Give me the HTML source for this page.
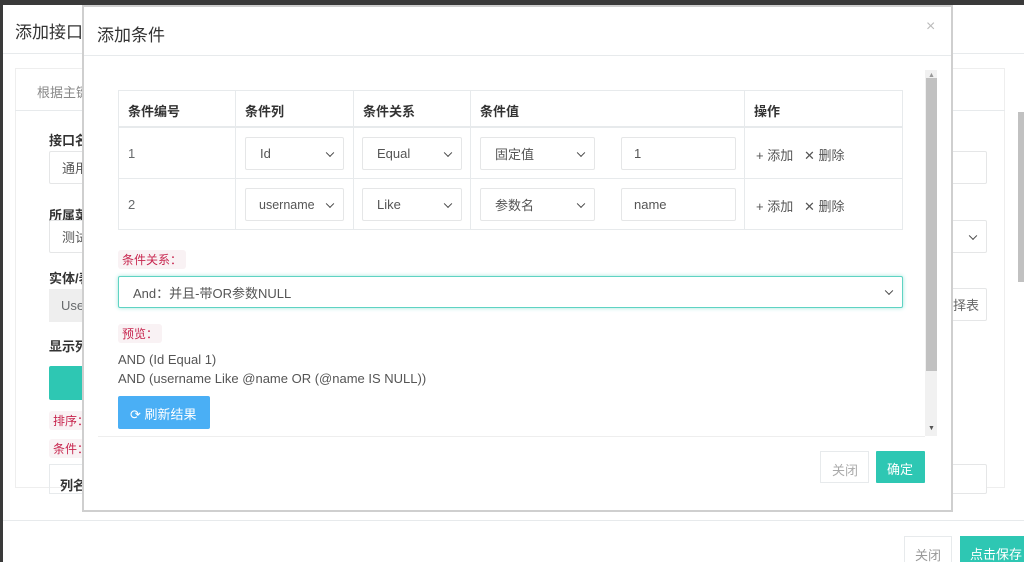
<!DOCTYPE html>
<html><head><meta charset="utf-8"><style>
*{box-sizing:border-box;margin:0;padding:0;white-space:nowrap}
html,body{width:1024px;height:562px;overflow:hidden}
body{background:#3a3a3a;font-family:"Liberation Sans","Noto Sans CJK SC",sans-serif;color:#676a6c;font-size:13px;position:relative}
.a{position:absolute}
.sel{position:absolute;border:1px solid #e5e6e7;border-radius:2px;background:#fff;font-size:13px;color:#555;padding-left:14px;display:flex;align-items:center}
.sel:after{content:"";position:absolute;right:10px;top:50%;width:5px;height:5px;border-right:1.5px solid #444;border-bottom:1.5px solid #444;transform:translateY(-70%) rotate(45deg)}
.inp{position:absolute;border:1px solid #e5e6e7;border-radius:2px;background:#fff;font-size:13px;color:#555;padding-left:12px;display:flex;align-items:center}
.tag{position:absolute;background:#f9f2f4;color:#c7254e;font-size:12px;padding:1px 4px;border-radius:3px}
.vl{position:absolute;width:1px;background:#e7eaec}
.hl{position:absolute;height:1px;background:#e7eaec}
b{font-weight:bold;color:#333}
</style></head><body>
<div class="a" style="left:3px;top:5px;width:1021px;height:557px;background:#fff"></div>
<div class="a" style="left:15px;top:18px;font-size:17px;color:#333">添加接口</div>
<div class="hl" style="left:3px;top:53px;width:1021px"></div>
<div class="a" style="left:15px;top:68px;width:990px;height:420px;border:1px solid #eee"></div>
<div class="a" style="left:37px;top:82px;color:#888">根据主键</div>
<div class="hl" style="left:15px;top:110px;width:990px"></div>
<div class="a" style="left:49px;top:130px"><b>接口名</b></div>
<div class="inp" style="left:49px;top:151px;width:60px;height:33px">通用</div>
<div class="a" style="left:49px;top:205px"><b>所属菜</b></div>
<div class="inp" style="left:49px;top:220px;width:60px;height:33px">测试</div>
<div class="a" style="left:49px;top:268px"><b>实体/表</b></div>
<div class="a" style="left:49px;top:289px;width:60px;height:33px;background:#eee;padding:9px 12px">Use</div>
<div class="a" style="left:49px;top:336px"><b>显示列</b></div>
<div class="a" style="left:49px;top:366px;width:50px;height:34px;background:#2ec7b3;border-radius:2px"></div>
<div class="tag" style="left:49px;top:411px">排序：</div>
<div class="tag" style="left:49px;top:439px">条件：</div>
<div class="a" style="left:49px;top:464px;width:60px;height:30px;border:1px solid #e7eaec;padding:10px"><b>列名</b></div>
<div class="inp" style="left:940px;top:151px;width:47px;height:33px"></div>
<div class="sel" style="left:940px;top:220px;width:47px;height:33px"></div>
<div class="inp" style="left:940px;top:288px;width:47px;height:33px;color:#666">择表</div>
<div class="inp" style="left:940px;top:464px;width:47px;height:30px"></div>
<div class="a" style="left:1018px;top:112px;width:6px;height:170px;background:#c1c1c1"></div>
<div class="hl" style="left:3px;top:520px;width:1021px"></div>
<div class="a" style="left:904px;top:536px;width:48px;height:30px;border:1px solid #e7eaec;color:#999;padding:8px 10px">关闭</div>
<div class="a" style="left:960px;top:536px;width:70px;height:30px;background:#2ec7b3;color:#fff;padding:8px 10px">点击保存</div>
<div class="a" style="left:82px;top:5px;width:871px;height:507px;background:#fff;border:2px solid #cfcfcf"></div>
<div class="a" style="left:97px;top:21px;font-size:17px;color:#333">添加条件</div>
<div class="a" style="left:926px;top:18px;font-size:16px;color:#bbb">×</div>
<div class="hl" style="left:84px;top:55px;width:867px"></div>
<div class="a" style="left:925px;top:70px;width:12px;height:366px;background:#f1f1f1"></div>
<div class="a" style="left:926px;top:78px;width:11px;height:293px;background:#c1c1c1"></div>
<div class="a" style="left:928px;top:72px;font-size:7px;color:#999">▲</div>
<div class="a" style="left:928px;top:425px;font-size:7px;color:#555">▼</div>
<div class="hl" style="left:98px;top:436px;width:827px;background:#eee"></div>
<div class="a" style="left:118px;top:90px;width:785px;height:140px;border:1px solid #e7eaec"></div>
<div class="hl" style="left:118px;top:126px;width:785px;height:2px"></div>
<div class="hl" style="left:118px;top:178px;width:785px"></div>
<div class="vl" style="left:235px;top:90px;height:140px"></div>
<div class="vl" style="left:353px;top:90px;height:140px"></div>
<div class="vl" style="left:470px;top:90px;height:140px"></div>
<div class="vl" style="left:744px;top:90px;height:140px"></div>
<div class="a" style="left:128px;top:101px"><b>条件编号</b></div>
<div class="a" style="left:245px;top:101px"><b>条件列</b></div>
<div class="a" style="left:363px;top:101px"><b>条件关系</b></div>
<div class="a" style="left:480px;top:101px"><b>条件值</b></div>
<div class="a" style="left:754px;top:101px"><b>操作</b></div>
<div class="a" style="left:128px;top:146px">1</div>
<div class="a" style="left:128px;top:197px">2</div>
<div class="sel" style="left:245px;top:137px;width:99px;height:33px">Id</div>
<div class="sel" style="left:362px;top:137px;width:100px;height:33px">Equal</div>
<div class="sel" style="left:480px;top:137px;width:115px;height:33px">固定值</div>
<div class="inp" style="left:621px;top:137px;width:115px;height:33px">1</div>
<div class="sel" style="left:245px;top:188px;width:99px;height:33px;padding-left:13px;font-size:12.5px">username</div>
<div class="sel" style="left:362px;top:188px;width:100px;height:33px">Like</div>
<div class="sel" style="left:480px;top:188px;width:115px;height:33px">参数名</div>
<div class="inp" style="left:621px;top:188px;width:115px;height:33px">name</div>
<div class="a" style="left:756px;top:145px;color:#555">+ 添加 &nbsp; ✕ 删除</div>
<div class="a" style="left:756px;top:196px;color:#555">+ 添加 &nbsp; ✕ 删除</div>
<div class="tag" style="left:118px;top:250px">条件关系：</div>
<div class="sel" style="left:118px;top:276px;width:785px;height:32px;border-color:#5fd3c3;box-shadow:0 0 4px #9fe6dc;padding-left:14px">And：并且-带OR参数NULL</div>
<div class="tag" style="left:118px;top:324px">预览：</div>
<div class="a" style="left:118px;top:350px;line-height:19px;color:#555">AND (Id Equal 1)<br>AND (username Like @name OR (@name IS NULL))</div>
<div class="a" style="left:118px;top:396px;width:92px;height:33px;background:#4aaff5;color:#fff;border-radius:2px;padding:8px 0 0 12px;font-size:13px">⟳ 刷新结果</div>
<div class="a" style="left:820px;top:451px;width:49px;height:32px;border:1px solid #e7eaec;color:#aaa;padding:8px 11px">关闭</div>
<div class="a" style="left:876px;top:451px;width:49px;height:32px;background:#2ec7b3;color:#fff;padding:8px 11px;border-radius:1px">确定</div>
</body></html>
